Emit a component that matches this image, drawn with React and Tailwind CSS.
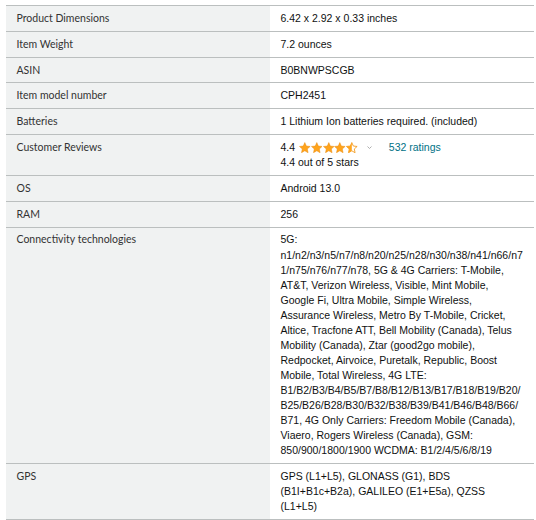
const ROWS = [
  { label: "Product Dimensions", value: "6.42 x 2.92 x 0.33 inches" },
  { label: "Item Weight", value: "7.2 ounces" },
  { label: "ASIN", value: "B0BNWPSCGB" },
  { label: "Item model number", value: "CPH2451" },
  { label: "Batteries", value: "1 Lithium Ion batteries required. (included)" },
  { label: "Customer Reviews", reviews: true },
  { label: "OS", value: "Android 13.0" },
  { label: "RAM", value: "256" },
  {
    label: "Connectivity technologies",
    value:
      "5G: n1/n2/n3/n5/n7/n8/n20/n25/n28/n30/n38/n41/n66/n71/n75/n76/n77/n78, 5G & 4G Carriers: T-Mobile, AT&T, Verizon Wireless, Visible, Mint Mobile, Google Fi, Ultra Mobile, Simple Wireless, Assurance Wireless, Metro By T-Mobile, Cricket, Altice, Tracfone ATT, Bell Mobility (Canada), Telus Mobility (Canada), Ztar (good2go mobile), Redpocket, Airvoice, Puretalk, Republic, Boost Mobile, Total Wireless, 4G LTE: B1/B2/B3/B4/B5/B7/B8/B12/B13/B17/B18/B19/B20/B25/B26/B28/B30/B32/B38/B39/B41/B46/B48/B66/B71, 4G Only Carriers: Freedom Mobile (Canada), Viaero, Rogers Wireless (Canada), GSM: 850/900/1800/1900 WCDMA: B1/2/4/5/6/8/19"
  },
  {
    label: "GPS",
    value: "GPS (L1+L5), GLONASS (G1), BDS (B1I+B1c+B2a), GALILEO (E1+E5a), QZSS (L1+L5)"
  }
];

const STAR = "M6 0.6l1.6 3.6 3.9 0.4-2.9 2.6 0.8 3.9L6 9.1 2.6 11.1l0.8-3.9L0.5 4.6l3.9-0.4z";

function Star({ fill }) {
  return (
    <svg width="11.6" height="11.6" viewBox="0 0 12 12" className="shrink-0">
      <defs>
        <clipPath id="half">
          <rect x="0" y="0" width="6" height="12" />
        </clipPath>
      </defs>
      {fill === "full" ? (
        <path d={STAR} fill="#ffa41c" stroke="#e88a0c" strokeWidth="0.5" />
      ) : (
        <>
          <path d={STAR} fill="none" stroke="#f29a1c" strokeWidth="0.9" />
          <path d={STAR} fill="#ffa41c" clipPath="url(#half)" />
        </>
      )}
    </svg>
  );
}

function Reviews() {
  return (
    <div>
      <div className="flex h-[15px] items-center">
        <span>4.4</span>
        <span className="ml-[4px] flex gap-[0.2px]">
          <Star fill="full" />
          <Star fill="full" />
          <Star fill="full" />
          <Star fill="full" />
          <Star fill="half" />
        </span>
        <svg width="5" height="3" viewBox="0 0 5 3" className="mb-[1px] ml-[9px]">
          <path d="M0.5 0.5L2.5 2.5L4.5 0.5" fill="none" stroke="#9a9a9a" strokeWidth="0.8" />
        </svg>
        <span className="ml-[17px] text-[#007185]">532 ratings</span>
      </div>
      <div className="leading-[15px]">4.4 out of 5 stars</div>
    </div>
  );
}

export default function App() {
  return (
    <div className="bg-white pl-[6px] pr-[2px] pt-[5px]">
      <div className="border-t border-[#bbbfbf]">
        {ROWS.map((row) => (
          <div
            key={row.label}
            className="grid grid-cols-[264px_1fr] border-b border-[#bbbfbf] leading-[15.05px]"
          >
            <div className="bg-[#f0f2f2] px-[10.5px] py-[4.9px] font-['Lato',sans-serif] text-[10.5px] text-[#333]">
              {row.label}
            </div>
            <div className="min-w-0 break-words px-[10.5px] py-[4.9px] font-['Liberation_Sans',Arial,sans-serif] text-[10.5px] text-[#0f1111]">
              {row.reviews ? <Reviews /> : row.value}
            </div>
          </div>
        ))}
      </div>
    </div>
  );
}
